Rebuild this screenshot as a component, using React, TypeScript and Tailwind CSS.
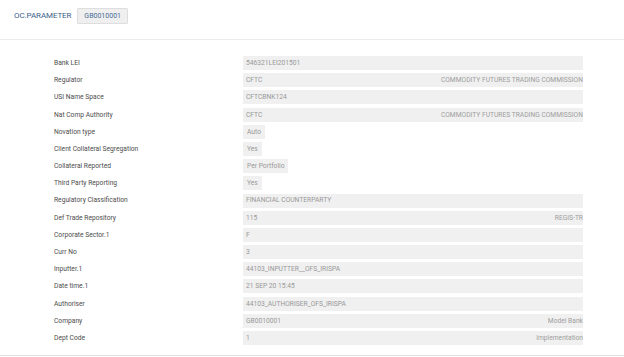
const rows: { label: string; value: string; extra?: string; short?: boolean }[] = [
  { label: 'Bank LEI', value: '546321LEI201501' },
  { label: 'Regulator', value: 'CFTC', extra: 'COMMODITY FUTURES TRADING COMMISSION' },
  { label: 'USI Name Space', value: 'CFTCBNK124' },
  { label: 'Nat Comp Authority', value: 'CFTC', extra: 'COMMODITY FUTURES TRADING COMMISSION' },
  { label: 'Novation type', value: 'Auto', short: true },
  { label: 'Client Collateral Segregation', value: 'Yes', short: true },
  { label: 'Collateral Reported', value: 'Per Portfolio', short: true },
  { label: 'Third Party Reporting', value: 'Yes', short: true },
  { label: 'Regulatory Classification', value: 'FINANCIAL COUNTERPARTY' },
  { label: 'Def Trade Repository', value: '115', extra: 'REGIS-TR' },
  { label: 'Corporate Sector.1', value: 'F' },
  { label: 'Curr No', value: '3' },
  { label: 'Inputter.1', value: '44103_INPUTTER__OFS_IRISPA' },
  { label: 'Date time.1', value: '21 SEP 20 15:45' },
  { label: 'Authoriser', value: '44103_AUTHORISER_OFS_IRISPA' },
  { label: 'Company', value: 'GB0010001', extra: 'Model Bank' },
  { label: 'Dept Code', value: '1', extra: 'Implementation' },
];

export default function App() {
  return (
    <div className="w-[624px] h-[357px] bg-white overflow-hidden font-['Roboto',sans-serif]">
      <header className="h-[40px] flex items-center gap-[6px] pl-[14px] pb-[7px] border-b border-[#ececec]">
        <span className="text-[8px] text-[#3d5f8c] tracking-[-0.1px]">OC.PARAMETER</span>
        <span className="h-[16px] px-[6px] flex items-center bg-[#efefef] border border-[#dedede] rounded-[1px] text-[7px] text-[#4a6c96]">
          GB0010001
        </span>
      </header>
      <div className="flex flex-col gap-[3.2px] pt-[16px] pb-[10px] border-b border-[#e2e2e2]">
        {rows.map((r) => (
          <div key={r.label} className="flex items-center h-[14px]">
            <span className="w-[243px] pl-[54px] shrink-0 text-[6.7px] text-[#4d4d4d]">{r.label}</span>
            {r.short ? (
              <span className="h-[14px] px-[4px] flex items-center bg-[#f0f0f0] text-[6.7px] text-[#999]">{r.value}</span>
            ) : (
              <span className="w-[340px] h-[14px] pl-[3px] flex items-center justify-between overflow-hidden bg-[#f0f0f0] text-[6.7px] text-[#999] whitespace-nowrap">
                <span>{r.value}</span>
                {r.extra && <span className="text-[#9e9e9e]">{r.extra}</span>}
              </span>
            )}
          </div>
        ))}
      </div>
    </div>
  );
}
